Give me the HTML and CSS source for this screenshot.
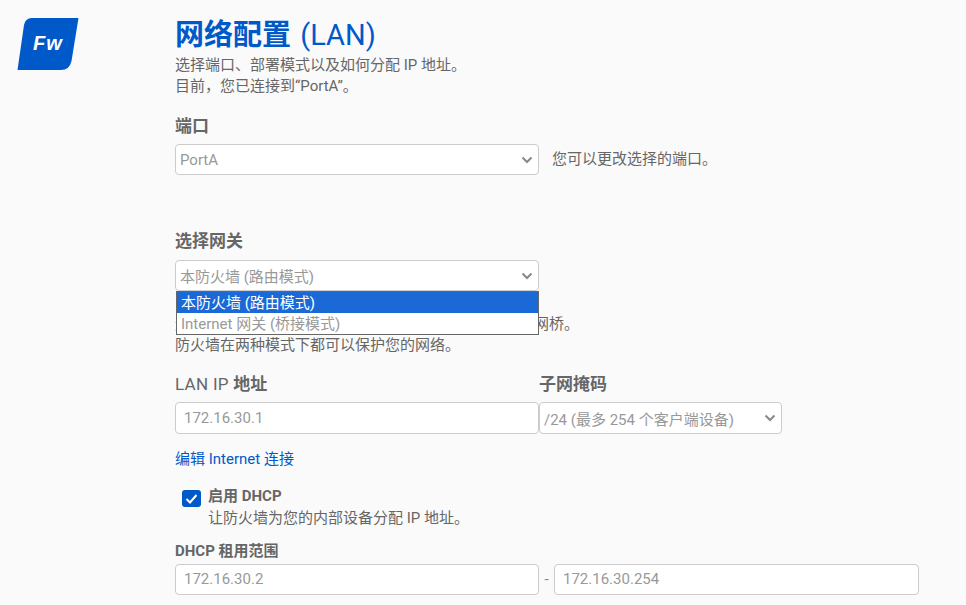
FILE: index.html
```html
<!DOCTYPE html>
<html lang="zh-CN">
<head>
<meta charset="utf-8">
<title>网络配置 (LAN)</title>
<link rel="stylesheet" href="styles.css">
</head>
<body>
<div class="page">
  <aside class="side">
    <svg class="logo" width="62" height="54" viewBox="0 0 62 54" aria-hidden="true"><path d="M10 1H61.500L54.500 44Q52.500 53 44 53H0.500L7 8Q8 2 14 1Z" fill="#0059c9"/></svg>
    <span class="logo-text">Fw</span>
  </aside>
  <main class="main">
    <h1 class="title">网络配置 <span class="lat">(LAN)</span></h1>
    <p class="text">选择端口、部署模式以及如何分配 IP 地址。</p>
    <p class="text">目前，您已连接到“PortA”。</p>

    <h2 class="label port-label">端口</h2>
    <div class="row">
      <div class="field select wide"><span>PortA</span><svg class="chev" width="12" height="8" viewBox="0 0 12 8"><path d="M1.500 1.500L6 6L10.500 1.500" fill="none" stroke="#888" stroke-width="2"/></svg></div>
      <span class="text hint">您可以更改选择的端口。</span>
    </div>

    <h2 class="label gw-label">选择网关</h2>
    <div class="dropwrap">
      <div class="field select wide"><span>本防火墙 (路由模式)</span><svg class="chev" width="12" height="8" viewBox="0 0 12 8"><path d="M1.500 1.500L6 6L10.500 1.500" fill="none" stroke="#888" stroke-width="2"/></svg></div>
      <ul class="menu">
        <li class="opt on">本防火墙 (路由模式)</li>
        <li class="opt">Internet 网关 (桥接模式)</li>
      </ul>
    </div>
    <p class="text gw-help">选择本防火墙作为网关，或者将 Internet 网关用作透明网桥。</p>
    <p class="text">防火墙在两种模式下都可以保护您的网络。</p>

    <div class="lan-grid">
      <h2 class="label"><span class="lat">LAN IP</span> 地址</h2>
      <h2 class="label">子网掩码</h2>
      <div class="field wide tall ip"><span>172.16.30.1</span></div>
      <div class="field select mask tall"><span>/24 (最多 254 个客户端设备)</span><svg class="chev" width="12" height="8" viewBox="0 0 12 8"><path d="M1.500 1.500L6 6L10.500 1.500" fill="none" stroke="#888" stroke-width="2"/></svg></div>
    </div>

    <a class="link" href="#">编辑 Internet 连接</a>

    <div class="check">
      <svg class="box" width="19" height="17" viewBox="0 0 19 17"><rect width="19" height="17" rx="3" fill="#0059c9"/><path d="M4.500 9L8 12.500L14.500 5" fill="none" stroke="#fff" stroke-width="2"/></svg>
      <div>
        <div class="check-title">启用 DHCP</div>
        <p class="text">让防火墙为您的内部设备分配 IP 地址。</p>
      </div>
    </div>

    <h3 class="label small">DHCP 租用范围</h3>
    <div class="range">
      <div class="field ip"><span>172.16.30.2</span></div>
      <span class="dash">-</span>
      <div class="field ip"><span>172.16.30.254</span></div>
    </div>
  </main>
</div>
</body>
</html>
```
FILE: styles.css
```css
* { box-sizing: border-box; }
html, body { margin: 0; height: 605px; overflow: hidden; background: #fafafa; }
body { font-family: Roboto, "Noto Sans CJK SC", sans-serif; color: #666; font-size: 15px; }
.page { display: flex; height: 605px; overflow: hidden; }
.side { position: relative; width: 175px; flex: none; }
.logo { position: absolute; left: 17px; top: 17px; }
.logo-text { position: absolute; left: 33px; top: 31px; color: #fff; font: italic 700 20px/24px "Liberation Sans", sans-serif; letter-spacing: 1px; }
.main { width: 744px; flex: none; padding-top: 16px; }
.title { margin: 0 0 1px; font-size: 29px; line-height: 38px; font-weight: 700; color: #0059c9; word-spacing: 2px; }
.lat { font-weight: 400; }
.text { margin: 0; font-size: 15px; line-height: 21px; color: #666; }
.label { margin: 0; font-size: 17px; line-height: 22px; font-weight: 700; color: #666; }
.label .lat { letter-spacing: 0.3px; }
.port-label { margin-top: 18px; }
.gw-label { margin-top: 55px; }
.row { display: flex; align-items: center; gap: 13px; margin-top: 7px; }
.field { display: flex; align-items: center; justify-content: space-between; height: 31px; background: #fff; border: 1px solid #ccc; border-radius: 4px; padding: 0 4px; color: #999; font-size: 15px; }
.wide { width: 364px; }
.select { padding-right: 5px; }
.chev { flex: none; }
.dropwrap { position: relative; margin-top: 8px; }
.menu { position: absolute; left: 1px; top: 31px; width: 363px; margin: 0; padding: 0; list-style: none; background: #fff; border: 1px solid #666; z-index: 2; }
.opt { height: 21px; line-height: 23px; padding-left: 4px; color: #999; white-space: nowrap; }
.opt.on { background: #1a69d6; color: #fff; }
.gw-help { margin-top: 23px; }
.lan-grid { display: grid; grid-template-columns: 364px 243px; margin-top: 17px; row-gap: 7px; }
.tall { height: 32px; }
.ip { padding-left: 8px; }
.link { display: block; margin-top: 15px; line-height: 21px; color: #0059c9; text-decoration: none; }
.check { display: flex; gap: 7px; margin: 14px 0 0 7px; }
.box { flex: none; margin-top: 6px; }
.check-title { font-weight: 700; line-height: 23px; margin-top: 1px; }
.small { font-size: 15px; line-height: 20px; margin-top: 12px; }
.range { display: grid; grid-template-columns: 364px 15px 365px; margin-top: 3px; }
.range .field { padding-bottom: 1px; }
.dash { text-align: center; line-height: 31px; color: #888; }
```
